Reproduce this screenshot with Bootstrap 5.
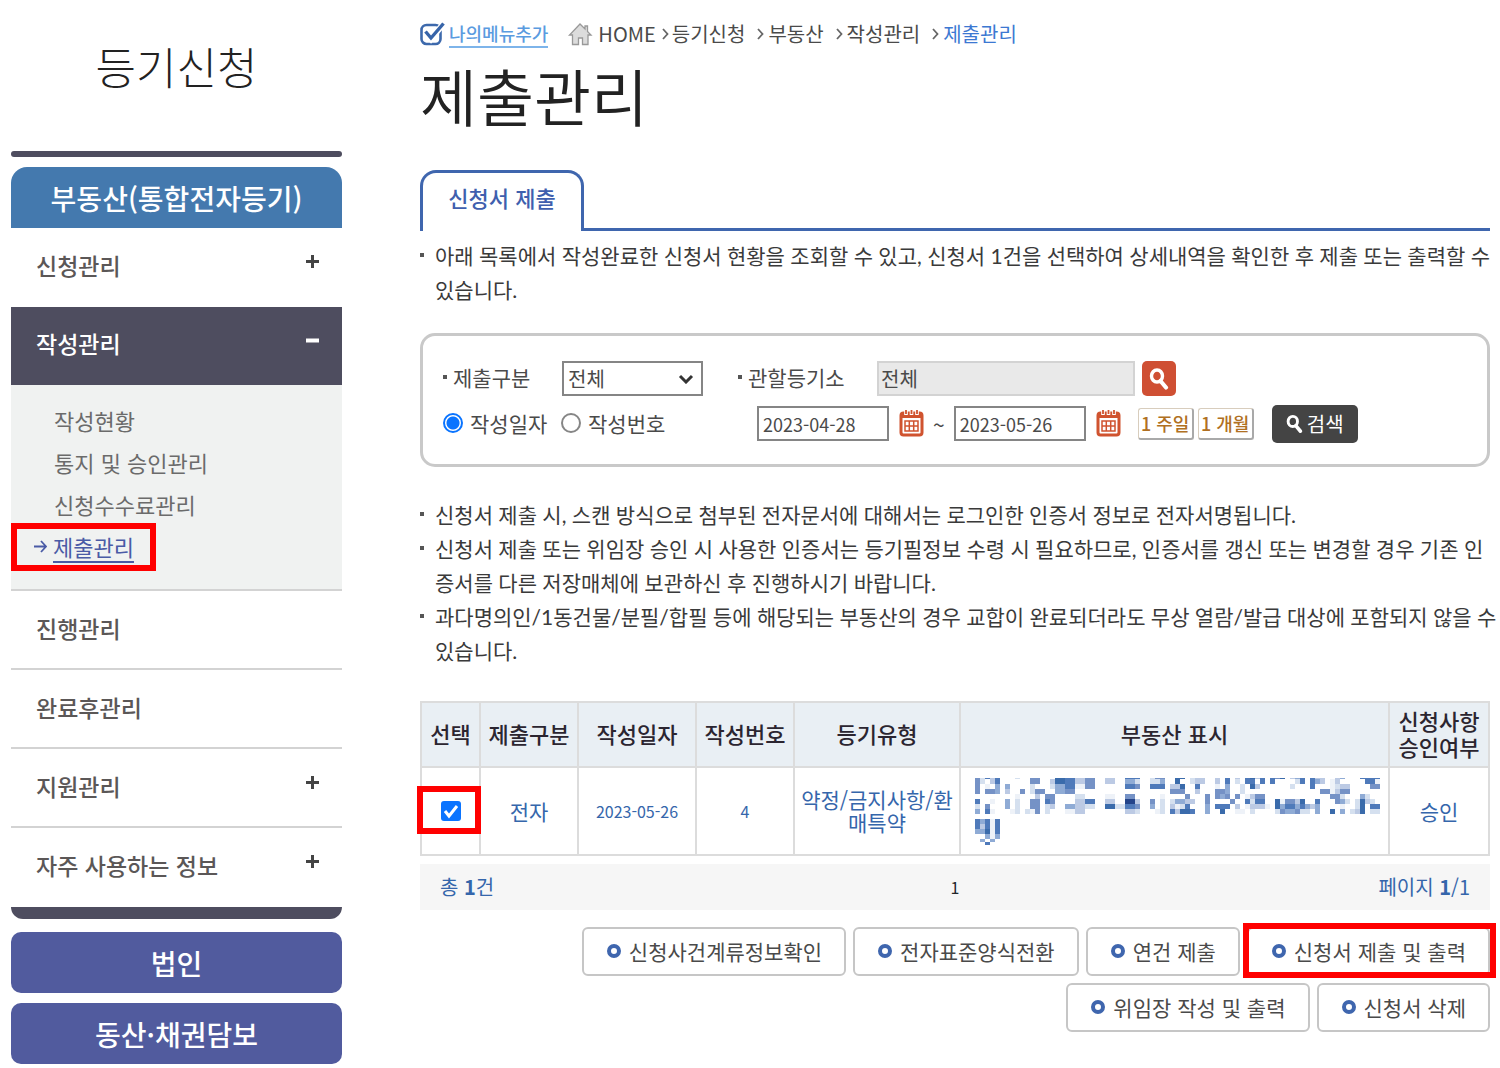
<!DOCTYPE html>
<html lang="ko">
<head>
<meta charset="utf-8">
<meta name="viewport" content="width=device-width, initial-scale=1">
<title>제출관리</title>
<link rel="stylesheet" href="https://cdn.jsdelivr.net/npm/bootstrap@5.3.0/dist/css/bootstrap.min.css">
<style>
body{font-family:"Noto Sans CJK KR","Noto Sans",sans-serif;font-size:21px;line-height:34px;color:#3a3a3a;background:#fff}
a{color:inherit;text-decoration:none}
.shell{padding:0 10px 0 11px;gap:78px}
.side{flex:0 0 331px}
.content-col{flex:1 1 0;min-width:0}
.side-title{font-size:44px;font-weight:300;line-height:132px;color:#222;margin:0 0 19px;text-align:center}
.side-rule{height:6px;border-radius:3px;background:#4e4d5f;margin-bottom:10px}
.side-head{height:61px;border-radius:16px 16px 0 0;background:#4479ae;color:#fff;font-size:28px;font-weight:500}
.menu-item{height:79px;padding:0 23px 4px 25px;border-bottom:2px solid #d3d3d3;font-size:23px;font-weight:500;color:#5b5757}
.menu-item svg{margin-bottom:6px}
.menu-item.no-line{border-color:transparent}
.menu-item.open{height:78px;background:#4e4d5f;border-color:#4e4d5f;color:#fff}
.submenu{background:#f0f2f1;padding:14px 0 22px 43px;border-bottom:2px solid #d3d3d3;font-size:22px;line-height:42px;color:#6b6b6b}
.submenu .current{color:#4a5ba6;margin-left:-20px;gap:6px}
.submenu .current a{text-decoration:underline;text-underline-offset:5px;text-decoration-thickness:2px}
.side-cap{height:12px;border-radius:0 0 16px 16px;background:#4e4d5f;margin-bottom:13px}
.side-btn{height:61px;border-radius:10px;background:#515b9e;color:#fff;font-size:28px;font-weight:500;margin-bottom:10px}
.mark-box{position:absolute;border:6px solid #f00;pointer-events:none;z-index:2}
.mark-menu{left:0;bottom:18px;width:145px;height:48px}
.mark-check{left:-5px;top:18px;width:64px;height:48px}
.mark-submit{left:-6px;top:-6px;right:-8px;bottom:-4px}
.crumbs{font-size:20px;padding-top:17px;color:#4a4a4a}
.crumbs .my-menu{font-size:18px;font-weight:500;line-height:25px;color:#5a9be0;border-bottom:2px solid #7db4ea;margin-right:18px}
.crumbs .chev{margin:0 4px 0 12px}
.crumbs .chev-first{margin:0 3px 0 6px}
.crumbs .here{color:#3c78d2}
.page-title{font-size:62px;font-weight:350;line-height:80px;color:#222;margin:4px 0 35px}
.tab-row{border-bottom:3px solid #3f66ae}
.tab-on{width:164px;height:61px;margin-bottom:-3px;padding-bottom:10px;border:3px solid #3f66ae;border-bottom:0;border-radius:16px 16px 0 0;background:#fff;color:#3f5fae;font-size:22px;font-weight:500}
.notes{list-style:none;padding:0;margin:0;font-family:Lato,"Noto Sans CJK KR",sans-serif}
.notes li{position:relative;padding-left:15px;white-space:nowrap}
.dot-lead::before,.notes li::before{content:"";display:inline-block;width:4px;height:4px;background:#555;flex:none}
.notes li::before{position:absolute;left:0;top:14px}
.dot-lead{display:inline-flex;align-items:center;gap:6px;padding-bottom:4px}
.search{border:3px solid #c9c9c9;border-radius:15px;padding:25px 20px 23px;margin:26px 0 31px;color:#4a4a4a}
.search .line-a,.search .line-b{height:35px}
.search .line-a{margin-bottom:10px}
.label-a{width:119px}
.label-b{width:139px;margin-left:35px}
.field{height:35px;border:2px solid #858585;background:#fff;font-size:20px;line-height:31px;padding:0 4px;color:#4a4a4a;border-radius:0}
select.field{width:141px;appearance:none;background:#fff url("data:image/svg+xml,%3Csvg xmlns='http://www.w3.org/2000/svg' viewBox='0 0 16 10'%3E%3Cpath d='M2 2l6 6 6-6' fill='none' stroke='%23333' stroke-width='3'/%3E%3C/svg%3E") no-repeat right 7px center/16px 10px}
.field.office{width:258px;background:#e9e9e9;border-color:#d3d3d3;padding:0 2px}
.field.date{width:132px;font-size:18px}
.find{width:34px;height:35px;border:0;border-radius:5px;background:#cf4f33;padding:0;margin-left:7px}
.pick{gap:7px;width:118px;padding-bottom:2px}
.pick input{appearance:none;width:20px;height:20px;margin:0;border:2px solid #868686;border-radius:50%;background:#fff;flex:none}
.pick input:checked{border-color:#0a74ff;background:radial-gradient(circle,#0a74ff 6px,#fff 7px)}
.picks{width:314px}
.cal{border:0;background:none;padding:0;margin-left:10px}
.tilde{padding:0 9px}
.quicks{gap:4px;margin-left:17px}
.quick{width:56px;height:32px;border:1px solid #d8cdbd;border-right:2px solid #a9a9a9;border-bottom:2px solid #a9a9a9;border-radius:3px;background:#fff;color:#b07022;font-size:18px;line-height:28px;font-weight:500;padding:0}
.go{width:86px;height:38px;border:0;border-radius:5px;background:#444;color:#fff;font-size:20px;line-height:38px;padding:0;margin-left:18px}
.result{table-layout:fixed;margin:33px 0 8px;border-color:#dcdcdc;text-align:center;color:#3566ab;line-height:23px}
.result>:not(caption)>*>*{padding:0 5px;border:2px solid #dcdcdc;vertical-align:middle;color:inherit;background:transparent}
.result thead th{height:65px;background:#e9eff4;color:#2b2530;font-size:22px;line-height:26px;font-weight:500;padding:0 0 4px}
.result tbody td{height:88px}
.result .small-date{font-size:16px}
.result input{appearance:none;width:20px;height:20px;margin:0;border-radius:3px;background:#0a74ff url("data:image/svg+xml,%3Csvg xmlns='http://www.w3.org/2000/svg' viewBox='0 0 20 20'%3E%3Cpath d='M4 10l4 5 8-10' fill='none' stroke='%23fff' stroke-width='3'/%3E%3C/svg%3E");display:block}
.mosaic{display:block;margin-left:9px}
.tally{height:46px;background:#f6f6f6;padding:0 20px;font-size:20px;color:#3566ab;margin-bottom:17px}
.actions{gap:7px}
.act{position:relative;height:49px;border:2px solid #c6c6c6;border-radius:6px;background:#fff;color:#4a4a4a;font-size:21px;line-height:34px;padding:0 22px 2px 23px;gap:8px}
.act::before{content:"";width:14px;height:14px;border:4px solid #3f66ae;border-radius:50%}
</style>
<script src="https://cdn.jsdelivr.net/npm/bootstrap@5.3.0/dist/js/bootstrap.bundle.min.js"></script>
</head>
<body>
<svg class="d-none">
  <symbol id="plus" viewBox="0 0 13 13"><path d="M6.5 0v13M0 6.5h13" stroke="#444" stroke-width="3"/></symbol>
  <symbol id="chev" viewBox="0 0 7 12"><path d="M1 1l4.500 5L1 11" fill="none" stroke="#666" stroke-width="1.800"/></symbol>
  <symbol id="lens" viewBox="0 0 20 22"><ellipse cx="8" cy="8" rx="5.500" ry="6" fill="none" stroke="#fff" stroke-width="3.400"/><path d="M11.500 13l5.500 6.500" stroke="#fff" stroke-width="4.200" stroke-linecap="round"/></symbol>
  <symbol id="cal" viewBox="0 0 25 27"><rect x="2" y="3" width="21" height="22" rx="2.500" fill="#fff" stroke="#d0532f" stroke-width="3"/><path d="M2 4h21v4H2z" fill="#d0532f"/><path d="M7 0v5M12.500 0v5M18 0v5" stroke="#fff" stroke-width="3.600"/><path d="M7 0v4M12.500 0v4M18 0v4" stroke="#d0532f" stroke-width="1.800"/><path d="M6 11h13v10H6zM10.300 11v10M14.700 11v10M6 16h13" fill="none" stroke="#d0532f" stroke-width="1.500"/></symbol>
</svg>
<div class="shell d-flex align-items-start">
  <nav class="side">
    <h2 class="side-title">등기신청</h2>
    <div class="side-rule"></div>
    <a href="#" class="side-head d-flex align-items-center justify-content-center">부동산(통합전자등기)</a>
    <a href="#" class="menu-item no-line d-flex align-items-center justify-content-between">신청관리<svg width="13" height="13"><use href="#plus"/></svg></a>
    <a href="#" class="menu-item open d-flex align-items-center justify-content-between">작성관리<svg width="13" height="13"><path d="M0 6.500h13" stroke="#fff" stroke-width="4"/></svg></a>
    <div class="submenu position-relative">
      <div><a href="#">작성현황</a></div>
      <div><a href="#">통지 및 승인관리</a></div>
      <div><a href="#">신청수수료관리</a></div>
      <div class="current d-flex align-items-center"><svg width="13" height="13" viewBox="0 0 13 13"><path d="M0 6.500h12M7 1l5 5.500L7 12" fill="none" stroke="#4a5ba6" stroke-width="1.800"/></svg><a href="#">제출관리</a></div>
      <span class="mark-box mark-menu"></span>
    </div>
    <a href="#" class="menu-item d-flex align-items-center justify-content-between">진행관리</a>
    <a href="#" class="menu-item d-flex align-items-center justify-content-between">완료후관리</a>
    <a href="#" class="menu-item d-flex align-items-center justify-content-between">지원관리<svg width="13" height="13"><use href="#plus"/></svg></a>
    <a href="#" class="menu-item no-line d-flex align-items-center justify-content-between">자주 사용하는 정보<svg width="13" height="13"><use href="#plus"/></svg></a>
    <div class="side-cap"></div>
    <a href="#" class="side-btn d-flex align-items-center justify-content-center">법인</a>
    <a href="#" class="side-btn d-flex align-items-center justify-content-center mb-0">동산·채권담보</a>
  </nav>

  <main class="content-col">
    <div class="crumbs d-flex align-items-center">
      <svg class="me-1" width="25" height="24" viewBox="0 0 25 24"><rect x="1.500" y="3" width="19" height="19" rx="5" fill="#fff" stroke="#3d69ac" stroke-width="2.600"/><path d="M5 10l6 7L24 1" fill="none" stroke="#fff" stroke-width="6"/><path d="M5.500 9.500l5.500 6.500L23.500 1.500" fill="none" stroke="#3764a9" stroke-width="3.400"/></svg>
      <a href="#" class="my-menu">나의메뉴추가</a>
      <svg class="me-1" width="28" height="24" viewBox="0 0 28 24"><path d="M14 2L3.500 13h3v9.500h6V16h4v6.500h5.500V13h3L21.500 9.500V4H19v3z" fill="#dcdcdc" stroke="#999" stroke-width="1.300"/></svg>
      <a href="#">HOME</a>
      <svg class="chev-first" width="7" height="12"><use href="#chev"/></svg><a href="#">등기신청</a>
      <svg class="chev" width="7" height="12"><use href="#chev"/></svg><a href="#">부동산</a>
      <svg class="chev" width="7" height="12"><use href="#chev"/></svg><a href="#">작성관리</a>
      <svg class="chev" width="7" height="12"><use href="#chev"/></svg><a href="#" class="here">제출관리</a>
    </div>
    <h1 class="page-title">제출관리</h1>
    <div class="tab-row"><a href="#" class="tab-on d-flex align-items-center justify-content-center">신청서 제출</a></div>
    <ul class="notes pt-2 mt-0">
      <li>아래 목록에서 작성완료한 신청서 현황을 조회할 수 있고, 신청서 1건을 선택하여 상세내역을 확인한 후 제출 또는 출력할 수<br>있습니다.</li>
    </ul>

    <form class="search">
      <div class="line-a d-flex align-items-center">
        <label class="dot-lead label-a" for="kind">제출구분</label>
        <select class="field" id="kind"><option>전체</option></select>
        <label class="dot-lead label-b" for="office">관할등기소</label>
        <input class="field office" id="office" type="text" value="전체" readonly>
        <button type="button" class="find d-flex align-items-center justify-content-center" aria-label="등기소 찾기"><svg width="20" height="22"><use href="#lens"/></svg></button>
      </div>
      <div class="line-b d-flex align-items-center">
        <div class="picks d-flex">
          <label class="pick d-flex align-items-center"><input type="radio" name="by" checked>작성일자</label>
          <label class="pick d-flex align-items-center"><input type="radio" name="by">작성번호</label>
        </div>
        <input class="field date" type="text" value="2023-04-28" aria-label="시작일">
        <button type="button" class="cal d-flex" aria-label="시작일 달력"><svg width="25" height="27"><use href="#cal"/></svg></button>
        <span class="tilde">~</span>
        <input class="field date" type="text" value="2023-05-26" aria-label="종료일">
        <button type="button" class="cal d-flex" aria-label="종료일 달력"><svg width="25" height="27"><use href="#cal"/></svg></button>
        <div class="quicks d-flex">
          <button type="button" class="quick">1 주일</button>
          <button type="button" class="quick">1 개월</button>
        </div>
        <button type="submit" class="go d-flex align-items-center justify-content-center gap-1"><svg width="17" height="20" viewBox="0 0 20 22"><use href="#lens" width="20" height="22"/></svg>검색</button>
      </div>
    </form>

    <ul class="notes">
      <li>신청서 제출 시, 스캔 방식으로 첨부된 전자문서에 대해서는 로그인한 인증서 정보로 전자서명됩니다.</li>
      <li>신청서 제출 또는 위임장 승인 시 사용한 인증서는 등기필정보 수령 시 필요하므로, 인증서를 갱신 또는 변경할 경우 기존 인<br>증서를 다른 저장매체에 보관하신 후 진행하시기 바랍니다.</li>
      <li>과다명의인/1동건물/분필/합필 등에 해당되는 부동산의 경우 교합이 완료되더라도 무상 열람/발급 대상에 포함되지 않을 수<br>있습니다.</li>
    </ul>

    <table class="table result">
      <colgroup><col width="59"><col width="98"><col width="118"><col width="98"><col width="166"><col><col width="100"></colgroup>
      <thead><tr><th>선택</th><th>제출구분</th><th>작성일자</th><th>작성번호</th><th>등기유형</th><th>부동산 표시</th><th>신청사항<br>승인여부</th></tr></thead>
      <tbody><tr>
        <td class="position-relative"><input class="mx-auto" type="checkbox" checked aria-label="4번 선택"><span class="mark-box mark-check"></span></td>
        <td>전자</td><td class="small-date">2023-05-26</td><td class="small-date">4</td><td>약정/금지사항/환매특약</td>
        <td><svg id="mosaic" width="405" height="67" viewBox="0 0 405 67" shape-rendering="crispEdges" class="mosaic"></svg></td>
        <td>승인</td>
      </tr></tbody>
    </table>
    <div class="tally row g-0 align-items-center">
      <div class="col">총 <b>1</b>건</div>
      <div class="col text-center text-dark fs-6">1</div>
      <div class="col text-end">페이지 <b>1</b>/1</div>
    </div>
    <div class="actions d-flex flex-wrap justify-content-end">
      <button type="button" class="act d-flex align-items-center">신청사건계류정보확인</button>
      <button type="button" class="act d-flex align-items-center">전자표준양식전환</button>
      <button type="button" class="act d-flex align-items-center">연건 제출</button>
      <button type="button" class="act d-flex align-items-center">신청서 제출 및 출력<span class="mark-box mark-submit"></span></button>
      <button type="button" class="act d-flex align-items-center">위임장 작성 및 출력</button>
      <button type="button" class="act d-flex align-items-center">신청서 삭제</button>
    </div>
  </main>
</div>
<script>
// Masked address: each entry is [top, height, "column:shade ..."] on a 5px grid
const shades = ['', '#eef2f8', '#d5e0ef', '#bccae4', '#8fabd5', '#7592c6', '#4f7aba', '#3a6bab', '#24448a'];
const bands = [
  [0,1,'0:5 1:2 2:6 3:3 4:6 8:2 11:5 12:5 16:7 17:7 18:6 19:6 20:3 21:3 22:5 23:5 26:3 27:3 30:6 31:6 32:6 35:2 36:5 37:5 40:7 41:7 43:2 44:3 45:3 48:3 50:6 52:3 54:6 55:7 56:3 57:6 59:6 60:5 61:7 63:3 64:4 65:6 67:6 68:3 69:3 72:3 73:4 77:6 78:6 79:6 80:6'],
  [1,5,'0:5 1:2 3:3 4:6 11:5 12:5 15:3 16:7 17:7 18:6 19:6 20:3 21:3 22:5 23:5 26:3 27:3 30:4 31:4 32:2 35:2 36:2 37:4 40:7 43:2 44:3 45:3 48:3 50:6 52:2 54:6 55:6 57:6 59:6 64:2 65:6 67:6 68:4 69:3 71:1 72:3 78:6 79:6 80:1'],
  [6,5,'0:5 2:1 4:4 6:4 11:2 15:2 16:4 17:4 18:6 19:6 20:1 21:1 22:5 23:5 30:6 31:6 32:5 35:6 36:6 37:6 39:3 40:3 41:7 44:6 48:1 50:4 53:2 55:7 56:3 63:2 67:6 71:1 72:2 73:3 74:3 79:5 80:5'],
  [11,5,'0:5 2:5 3:5 4:4 6:3 9:5 11:2 12:5 13:5 16:4 17:4 18:5 19:5 39:5 40:5 41:5 44:3 48:5 49:5 50:4 53:2 69:5 70:5 71:1 72:3 73:5 74:5'],
  [16,5,'8:1 12:3 14:5 15:5 20:2 21:2 26:1 27:1 30:5 31:5 37:1 42:5 46:5 48:5 49:4 50:5 52:5 54:1 55:3 56:5 57:5 71:5 72:5 73:2 77:4 78:2'],
  [21,5,'0:6 3:1 6:4 8:2 11:5 12:5 14:6 15:5 20:3 21:3 22:6 23:6 26:3 27:3 30:8 31:8 32:3 35:5 37:2 39:2 40:4 41:4 42:3 43:3 46:5 51:5 54:6 55:2 56:6 57:6 60:7 61:1 62:5 63:5 64:3 65:7 68:6 72:5 73:4 74:2 76:2 77:7 78:3 79:2'],
  [26,5,'0:2 2:5 6:4 8:2 11:5 12:5 14:2 15:3 18:4 19:4 20:3 21:3 22:2 23:2 26:7 27:7 28:2 29:2 30:6 31:6 32:5 35:4 37:2 39:3 40:1 41:2 42:6 46:4 48:6 49:6 50:6 52:3 54:1 55:3 56:3 57:3 58:1 60:7 61:4 62:6 63:6 64:4 65:6 66:4 67:3 68:4 73:1 76:2 77:7 79:6 80:6'],
  [31,5,'0:4 2:6 3:1 7:1 8:2 10:2 11:1 12:5 14:2 18:1 19:1 20:3 21:3 30:3 31:3 32:2 36:1 37:2 39:6 40:3 41:7 42:7 43:6 46:4 49:7 52:1 53:1 55:2 60:2 61:5 62:4 63:4 64:5 65:2 66:2 68:4 71:7 73:4 75:2 76:3 77:7 79:2 80:2'],
  [41,5,'0:6 1:4 2:6 3:1 4:6'],
  [46,5,'0:6 1:3 2:6 3:1 4:6'],
  [51,5,'0:4 1:4 2:7 3:1 4:6'],
  [56,5,'2:4 3:1 4:4'],
  [61,3,'1:4 3:4'],
  [64,3,'2:6']
];
document.getElementById('mosaic').innerHTML = bands.map(([y, h, cells]) =>
  cells.split(' ').map(c => {
    const [col, s] = c.split(':');
    return `<rect x="${col * 5}" y="${y}" width="5" height="${h}" fill="${shades[s]}"/>`;
  }).join('')).join('');
</script>
</body>
</html>
